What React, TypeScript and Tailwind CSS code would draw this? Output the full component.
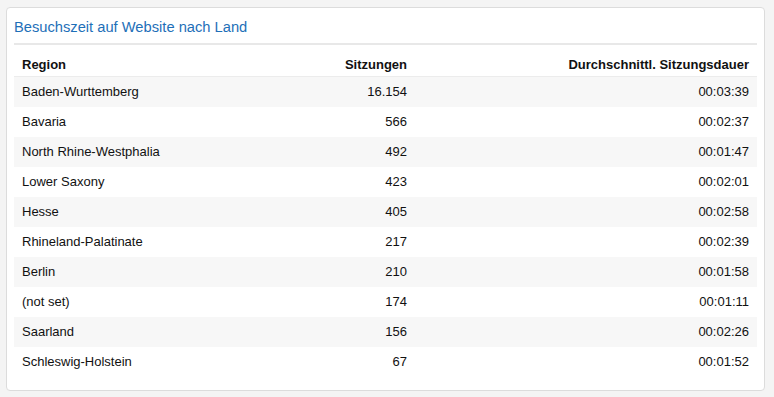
const rows: [string, string, string][] = [
  ["Baden-Wurttemberg", "16.154", "00:03:39"],
  ["Bavaria", "566", "00:02:37"],
  ["North Rhine-Westphalia", "492", "00:01:47"],
  ["Lower Saxony", "423", "00:02:01"],
  ["Hesse", "405", "00:02:58"],
  ["Rhineland-Palatinate", "217", "00:02:39"],
  ["Berlin", "210", "00:01:58"],
  ["(not set)", "174", "00:01:11"],
  ["Saarland", "156", "00:02:26"],
  ["Schleswig-Holstein", "67", "00:01:52"],
];

export default function App() {
  return (
    <div className="min-h-[397px] w-[774px] bg-[#f4f4f4] px-[6px] pt-[7px] pb-[7px] font-['Liberation_Sans',Arial,sans-serif]">
      <div className="w-[759px] rounded-[4px] border border-[#dcdcdc] bg-white px-[7px] pb-[13px]">
        <h3 className="h-[37px] border-b-2 border-[#e8e8e8] pt-[11px] text-[14.7px] leading-[17px] text-[#1e6fb8]">
          Besuchszeit auf Website nach Land
        </h3>
        <table className="w-full table-fixed border-collapse text-[13px] leading-[15px] text-[#111]">
          <thead>
            <tr className="border-b border-[#ececec]">
              <th className="w-[193px] pt-[12px] pb-[4px] pl-2 text-left font-bold">Region</th>
              <th className="w-[200px] pt-[12px] pb-[4px] text-right font-bold">Sitzungen</th>
              <th className="pt-[12px] pb-[4px] pr-2 text-right font-bold">Durchschnittl. Sitzungsdauer</th>
            </tr>
          </thead>
          <tbody>
            {rows.map((r, i) => (
              <tr key={r[0]} className={`h-[30px] ${i % 2 === 0 ? "bg-[#f7f7f7]" : "bg-white"}`}>
                <td className="pl-2 whitespace-nowrap">{r[0]}</td>
                <td className="text-right">{r[1]}</td>
                <td className="pr-2 text-right">{r[2]}</td>
              </tr>
            ))}
          </tbody>
        </table>
      </div>
    </div>
  );
}
